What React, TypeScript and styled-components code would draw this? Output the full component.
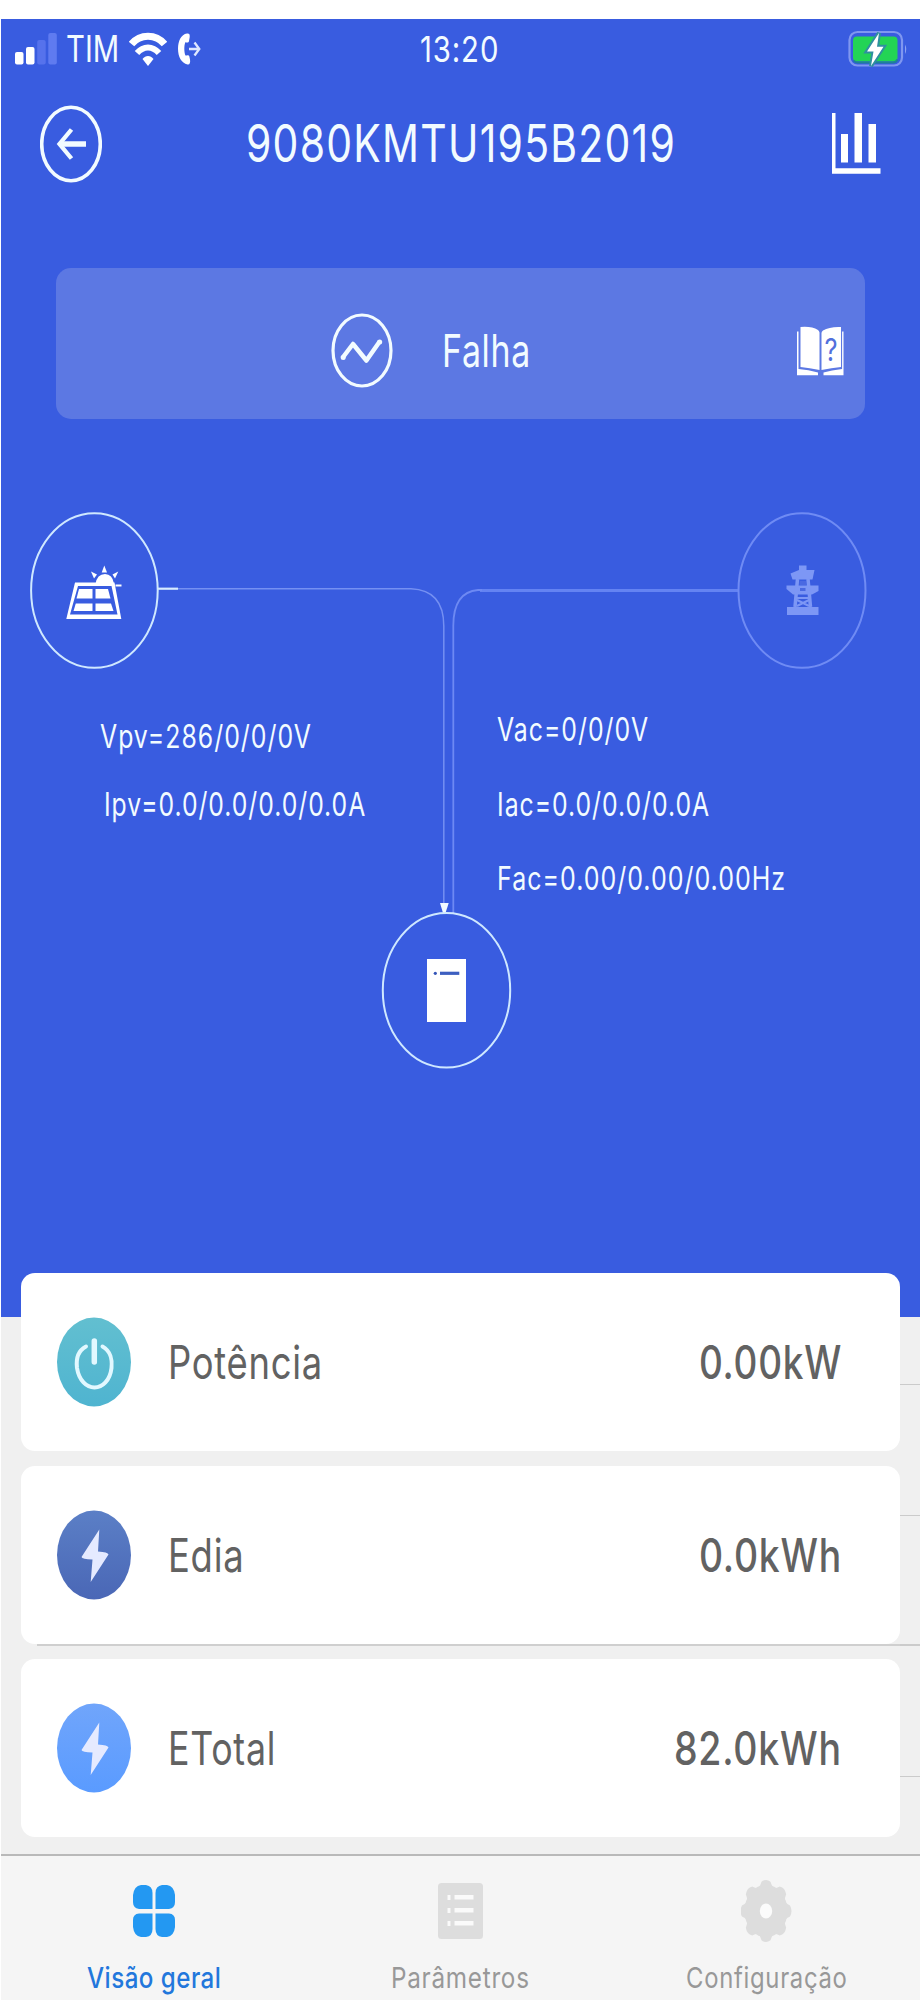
import React, { useLayoutEffect, useRef, useState } from "react";
import styled, { createGlobalStyle } from "styled-components";

const GlobalStyle = createGlobalStyle`
  * { box-sizing: border-box; }
  body {
    margin: 0;
    background: #ffffff;
    font-family: Inter, "Liberation Sans", sans-serif;
  }
  svg { display: block; flex: none; }
`;

const Frame = styled.div`
  width: 919px;
  height: 2000px;
  margin-left: 1px;
  padding-top: 19px;
  display: flex;
  flex-direction: column;
  overflow: hidden;
`;

const Hero = styled.section`
  height: 1298px;
  flex: none;
  background: #395ce0;
  color: #f2fbff;
`;

const FitBox = styled.span<{ $w: number; $size: number; $weight?: number; $color?: string; $track?: number }>`
  display: block;
  flex: none;
  width: ${(p) => p.$w}px;
  height: 40px;
  line-height: 40px;
  font-size: ${(p) => p.$size}px;
  font-weight: ${(p) => p.$weight ?? 400};
  letter-spacing: ${(p) => p.$track ?? 0}em;
  color: ${(p) => p.$color ?? "inherit"};
  white-space: nowrap;
`;

const FitInner = styled.span`
  display: inline-block;
  transform-origin: 0 50%;
`;

type FitProps = { w: number; size: number; weight?: number; color?: string; track?: number; children: string };

/* Condenses a line of text horizontally so that it fills the given width. */
function FitText({ w, size, weight, color, track, children }: FitProps) {
  const ref = useRef<HTMLSpanElement>(null);
  const [scale, setScale] = useState(1);
  useLayoutEffect(() => {
    if (ref.current) setScale(w / ref.current.offsetWidth);
  }, [w, size, track, children]);
  return (
    <FitBox $w={w} $size={size} $weight={weight} $color={color} $track={track}>
      <FitInner ref={ref} style={{ transform: `scaleX(${scale})` }}>
        {children}
      </FitInner>
    </FitBox>
  );
}

const StatusBar = styled.div`
  display: grid;
  grid-template-columns: 405px 80px 1fr;
  align-items: center;
  height: 59px;
  padding: 0 12px 0 14px;
`;

const Carrier = styled.div`
  display: flex;
  align-items: center;
`;

const CarrierName = styled.div`
  margin: 0 10px 0 8px;
`;

const CallSlot = styled.div`
  margin-left: 10px;
`;

const BatterySlot = styled.div`
  justify-self: end;
`;

const Header = styled.header`
  display: flex;
  align-items: center;
  justify-content: space-between;
  height: 131px;
  padding: 0 39px 0 39px;
`;

const TitleSlot = styled.div`
  margin-left: -12px;
`;

const StateBanner = styled.div`
  display: flex;
  align-items: center;
  width: 809px;
  height: 151px;
  margin: 59px 0 0 55px;
  padding: 14px 21px 0 275px;
  border-radius: 15px;
  background: #5c78e3;
`;

const StateName = styled.div`
  margin-left: 49px;
  flex: 1;
`;

const Diagram = styled.div`
  position: relative;
  display: flex;
  height: 898px;
`;

const Wiring = styled.svg`
  position: absolute;
  left: -1px;
  top: 0;
`;

const Readings = styled.div<{ $left: number; $top: number; $gap: number }>`
  display: flex;
  flex-direction: column;
  gap: ${(p) => p.$gap}px;
  width: ${(p) => p.$left + 397}px;
  padding: ${(p) => p.$top}px 0 0 ${(p) => p.$left}px;
`;

const Indent = styled.div`
  margin-left: 4px;
`;

const Totals = styled.section`
  display: flex;
  flex: 1;
  background: #f0f0f0;
  padding-left: 20px;
`;

const CardColumn = styled.div`
  width: 879px;
  margin-top: -44px;
`;

const Card = styled.article<{ $h: number }>`
  display: flex;
  align-items: center;
  height: ${(p) => p.$h}px;
  padding: 0 58px 1px 36px;
  border-radius: 14px;
  background: #ffffff;
`;

const CardLabel = styled.div`
  flex: 1;
  margin-left: 37px;
`;

const Gap = styled.div<{ $h: number }>`
  height: ${(p) => p.$h}px;
`;

const Rule = styled.div`
  height: 2px;
  margin-left: 16px;
  background: #cfcfcf;
`;

const Gutter = styled.div`
  display: flex;
  flex-direction: column;
  width: 20px;
`;

const GutterRow = styled.div<{ $h: number; $thick?: boolean }>`
  height: ${(p) => p.$h}px;
  border-bottom: ${(p) => (p.$thick ? 2 : 1)}px solid #cbcbcb;
`;

const TabBar = styled.nav`
  display: grid;
  grid-template-columns: repeat(3, 1fr);
  flex: none;
  height: 146px;
  border-top: 2px solid #b9b9b9;
  background: #f5f5f5;
`;

const Tab = styled.div`
  display: flex;
  flex-direction: column;
  align-items: center;
  padding-top: 22px;
`;

const TabIcon = styled.div`
  display: flex;
  align-items: center;
  height: 66px;
  margin-bottom: 14px;
`;

const Signal = () => (
  <svg width="43" height="34" viewBox="15 31 43 34">
    <rect x="15" y="51" width="8.5" height="12.5" rx="2" fill="#fff" />
    <rect x="26" y="46" width="8.5" height="17.5" rx="2" fill="#fff" />
    <rect x="37.2" y="39" width="8.5" height="24.5" rx="2" fill="#5672ec" />
    <rect x="48.3" y="32" width="8.5" height="31.5" rx="2" fill="#5f7bf0" />
  </svg>
);

const Wifi = () => (
  <svg width="38" height="36" viewBox="0 0 38 36" fill="none" stroke="#fff">
    <path d="M2.500 13C11 2.500 27 2.500 35.500 13" strokeWidth="7" />
    <path d="M8 22C14.500 14.500 23.500 14.500 30 22" strokeWidth="6" />
    <path d="M13.500 28C16.500 24 21.500 24 24.500 28L19 35Z" fill="#fff" stroke="none" />
  </svg>
);

const Call = () => (
  <svg width="24" height="34" viewBox="178 31 24 34">
    <path
      d="M188 32.500C182 33.500 179 40 179 47.500C179 56 182.500 62 188.500 63.500C190.800 64 191.500 61.500 191 58.500L190.300 55.300C189.800 53.600 187.500 54.300 186.500 54.600C185 51 185 44.500 186.300 41.200C187.700 41.600 189.800 42 190 40L190.700 36C191 33.300 190.200 32.200 188 32.500Z"
      fill="#fff"
    />
    <path d="M190 48H200M195.500 41.500L200.300 48L195.500 54.500" fill="none" stroke="#dfe8ff" strokeWidth="2.300" />
  </svg>
);

const Battery = () => (
  <svg width="60" height="38" viewBox="848 29 60 38">
    <rect x="849.500" y="31" width="52.500" height="33.500" rx="8" fill="none" stroke="#7f97f0" strokeWidth="2.200" />
    <rect x="853" y="35.500" width="44.500" height="25" rx="4" fill="#23d455" />
    <path d="M853.500 59.500Q855 61.500 858 61.500H893Q896 61.500 897.500 58.500" fill="none" stroke="#1f7f9a" strokeWidth="2" />
    <path d="M905 43.500Q907.500 48 905 53Z" fill="#8ca2f2" />
    <path d="M879 32L867 50.500H873.500L871 65L883.500 45.800H877Z" fill="#fff" stroke="#2f8fa0" strokeWidth="4" paintOrder="stroke" />
  </svg>
);

const Back = () => (
  <svg width="62" height="78" viewBox="40 104.500 62 78" fill="none" stroke="#f2fbff">
    <ellipse cx="71" cy="143.500" rx="29.300" ry="36.700" strokeWidth="3.600" />
    <path d="M86 143.500H60" strokeWidth="5.500" />
    <path d="M71.500 129L59.500 143.500L71.500 158" strokeWidth="4.300" />
  </svg>
);

const Chart = () => (
  <svg width="49" height="61" viewBox="832 113 49 61" fill="#fff">
    <path d="M832 113H835.500V168.200H880.500V173.700H832Z" />
    <rect x="841" y="134" width="7" height="28.500" />
    <rect x="854.500" y="113" width="7.500" height="49.500" />
    <rect x="868.500" y="124" width="7.500" height="38.500" />
  </svg>
);

const Wave = () => (
  <svg width="62" height="76" viewBox="331.300 312 62 76" fill="none" stroke="#f2fbff">
    <ellipse cx="362.300" cy="349.500" rx="29" ry="35.500" strokeWidth="3.200" />
    <path d="M342.700 357L353.300 343L366.700 359.500L380 340.500" strokeWidth="4.500" strokeLinejoin="round" />
    <circle cx="343.500" cy="356.500" r="2.500" fill="#f2fbff" stroke="none" />
    <circle cx="380" cy="341" r="2.500" fill="#f2fbff" stroke="none" />
  </svg>
);

const Manual = () => (
  <svg width="48" height="50" viewBox="796.500 325.500 48 50" fill="#fff">
    <path d="M801 326.500Q812 325.500 818.500 329.500Q819.800 330.500 820 332V369.500Q810 367.500 801 366.500Z" />
    <path d="M841.500 326.500Q830 326 823.500 330Q822 331 822 332.500V369.500Q832 367.500 841.500 366.500Z" />
    <path d="M797.500 331H799V368.500Q809 369 818.500 372V374.800H797.500Z" />
    <path d="M844 331H842.600V368.500Q832 369.500 824 372V374.800H844Z" />
    <text x="825" y="360" fontSize="31" fontWeight="400" fill="#5270dc" textLength="13" lengthAdjust="spacingAndGlyphs">
      ?
    </text>
  </svg>
);

const WiringDrawing = () => (
  <Wiring width="920" height="680" viewBox="0 419 920 680" fill="none">
    <path d="M178 588.700H411Q443.800 590 443.800 626V904" stroke="#7590f2" strokeWidth="1.500" />
    <path d="M738 590.500H480" stroke="#6483f2" strokeWidth="3" />
    <path d="M482 590H478Q453.300 592 453.300 626V913" stroke="#6d89f3" strokeWidth="1.800" />
    <path d="M158 588.700H178" stroke="#d8ecff" strokeWidth="2.200" />
    <path d="M440 903H448.700L445.500 913H443Z" fill="#f2fbff" />
    <ellipse cx="94.400" cy="590.500" rx="63.300" ry="77.300" stroke="#cfe8ff" strokeWidth="2" />
    <ellipse cx="802" cy="590.500" rx="63.500" ry="77.300" stroke="#6f8bf4" strokeWidth="2" />
    <ellipse cx="446.500" cy="990.300" rx="63.700" ry="77.300" stroke="#cfe8ff" strokeWidth="2" />

    <g fill="#fff">
      <path fillRule="evenodd" d="M75 582.500H114.500L121.300 619H66.300ZM78 586L70 614.500H117.500L111.500 586Z" />
      <path d="M79 589H92.500V598.500H76.500Z" />
      <path d="M95.500 589H108L110.500 598.500H95.500Z" />
      <path d="M75.800 603.500H92.500V611H73.500Z" />
      <path d="M95.500 603.500H111L113.500 611H95.500Z" />
      <path d="M95.500 584Q97 574 105 574Q112.500 574.500 113.800 583L115 587.500L111 585Z" />
      <path d="M104.300 565.500L107 572.500H101.700Z" />
      <path d="M91 571.500L97 574.500L94 578.500Z" />
      <path d="M118.300 571.500L112.500 574.500L115 578.500Z" />
      <path d="M115.500 584.500H121.500V586.500H115.500Z" />
    </g>

    <g fill="#7d97f5">
      <path d="M799 565.500H806.500V570H814.500L812.500 579.500H792.500L790.500 573.500L799 570Z" />
      <path d="M786.500 585.500H818.500V591L812 594.500H793L786.500 589Z" />
      <path d="M787 607H818.500V615H787Z" />
      <path d="M797.500 579L795 607M808 579L810.500 607" stroke="#7d97f5" strokeWidth="3.500" />
      <path d="M796 598H810M797 600L809 606M809 600L797 606" stroke="#7d97f5" strokeWidth="2" />
      <path d="M799.500 581H806V585H799.500ZM800 588H805.500V591H800Z" fill="#4a69e2" />
    </g>

    <rect x="427" y="959" width="39" height="63" fill="#fff" />
    <circle cx="435.300" cy="973.300" r="1.600" fill="#3455b8" />
    <path d="M440 973.300H459.300" stroke="#3d5fc0" strokeWidth="3.200" />
  </Wiring>
);

const Power = () => (
  <svg width="74" height="90" viewBox="57 1316 74 90">
    <defs>
      <linearGradient id="teal" x1="0" y1="0" x2="0" y2="1">
        <stop offset="0" stopColor="#62bfd0" />
        <stop offset="1" stopColor="#4fb4d0" />
      </linearGradient>
    </defs>
    <ellipse cx="94" cy="1361" rx="37" ry="44.500" fill="url(#teal)" />
    <path d="M86 1345.500C77.500 1350 76 1359 77 1367C79 1379.500 86.500 1386.500 94.500 1386.500C102.500 1386.500 110 1379.500 111.500 1367C112.500 1359 110.500 1350 102.500 1345.500" fill="none" stroke="#e2f8ff" strokeWidth="4" strokeLinecap="round" />
    <path d="M94.300 1340V1361" fill="none" stroke="#e2f8ff" strokeWidth="5.500" strokeLinecap="round" />
  </svg>
);

const BoltBadge = ({ id, from, to }: { id: string; from: string; to: string }) => (
  <svg width="74" height="90" viewBox="57 1509.500 74 90">
    <defs>
      <linearGradient id={id} x1="0" y1="0" x2="0" y2="1">
        <stop offset="0" stopColor={from} />
        <stop offset="1" stopColor={to} />
      </linearGradient>
    </defs>
    <ellipse cx="94" cy="1554.500" rx="37" ry="44.500" fill={`url(#${id})`} />
    <path d="M99.300 1529L81.500 1556.500Q82 1558.500 92.500 1559L90.700 1581.500L108.500 1554Q108 1551.500 98 1551Z" fill="#e5eaff" />
  </svg>
);

const OverviewIcon = () => (
  <svg width="42" height="52" viewBox="0 0 42 52" fill="#2398f2">
    <path d="M8 0H13Q19.500 1 19.500 8V24H6Q0 23 0 17V10Q1 1 8 0Z" />
    <path d="M29 0H34Q41 1 42 10V17Q42 23 36 24H22.500V8Q22.500 1 29 0Z" />
    <path d="M6 28.500H19.500V44Q19.500 51 13 52H8Q1 51 0 42V35Q0 29 6 28.500Z" />
    <path d="M22.500 28.500H36Q42 29 42 35V42Q41 51 34 52H29Q22.500 51 22.500 44Z" />
  </svg>
);

const ListIcon = () => (
  <svg width="45" height="56" viewBox="0 0 45 56" fill="#fafafa">
    <rect width="45" height="56" rx="3.500" fill="#dddddd" />
    <rect x="9.500" y="12" width="3" height="5" />
    <rect x="9.500" y="25" width="3" height="5" />
    <rect x="9.500" y="38" width="3" height="5" />
    <rect x="16.500" y="12" width="19" height="4.500" />
    <rect x="16.500" y="25" width="19" height="4.500" />
    <rect x="16.500" y="38" width="19" height="4.500" />
  </svg>
);

const GearIcon = () => (
  <svg width="52" height="64" viewBox="-25 -32 52 64">
    <g transform="scale(1 1.220)" fill="#dddddd">
      <circle r="21.500" />
      {[0, 45, 90, 135, 180, 225, 270, 315].map((a) => (
        <path key={a} transform={`rotate(${a})`} d="M-7.500 -19Q-5.500 -21 -4.500 -24Q0 -27 4.500 -24Q5.500 -21 7.500 -19Z" />
      ))}
      <circle r="6.200" fill="#fbfbfb" />
    </g>
  </svg>
);

export default function App() {
  return (
    <>
      <GlobalStyle />
      <Frame>
        <Hero>
          <StatusBar>
            <Carrier>
              <Signal />
              <CarrierName>
                <FitText w={53} size={37}>TIM</FitText>
              </CarrierName>
              <Wifi />
              <CallSlot>
                <Call />
              </CallSlot>
            </Carrier>
            <FitText w={79} size={36} track={0.03}>13:20</FitText>
            <BatterySlot>
              <Battery />
            </BatterySlot>
          </StatusBar>

          <Header>
            <Back />
            <TitleSlot>
              <FitText w={430} size={52} track={0.03}>9080KMTU195B2019</FitText>
            </TitleSlot>
            <Chart />
          </Header>

          <StateBanner>
            <Wave />
            <StateName>
              <FitText w={89} size={45} track={0.02}>Falha</FitText>
            </StateName>
            <Manual />
          </StateBanner>

          <Diagram>
            <WiringDrawing />
            <Readings $left={99} $top={297.5} $gap={27}>
              <FitText w={212} size={32} track={0.04}>Vpv=286/0/0/0V</FitText>
              <Indent>
                <FitText w={262} size={33} track={0.04}>Ipv=0.0/0.0/0.0/0.0A</FitText>
              </Indent>
            </Readings>
            <Readings $left={0} $top={290.5} $gap={34.5}>
              <FitText w={152} size={32} track={0.04}>Vac=0/0/0V</FitText>
              <FitText w={213} size={33} track={0.04}>Iac=0.0/0.0/0.0A</FitText>
              <FitText w={289} size={32} track={0.04}>Fac=0.00/0.00/0.00Hz</FitText>
            </Readings>
          </Diagram>
        </Hero>

        <Totals>
          <CardColumn>
            <Card $h={178}>
              <Power />
              <CardLabel>
                <FitText w={155} size={46} track={0.02} color="#626262">Potência</FitText>
              </CardLabel>
              <FitText w={143} size={46} weight={500} track={0.02} color="#626262">0.00kW</FitText>
            </Card>
            <Gap $h={15} />
            <Card $h={178}>
              <BoltBadge id="indigo" from="#5b7fc6" to="#4a67b6" />
              <CardLabel>
                <FitText w={76} size={46} track={0.02} color="#626262">Edia</FitText>
              </CardLabel>
              <FitText w={143} size={46} weight={500} track={0.02} color="#626262">0.0kWh</FitText>
            </Card>
            <Rule />
            <Gap $h={13} />
            <Card $h={178}>
              <BoltBadge id="azure" from="#70a5fb" to="#5a9bff" />
              <CardLabel>
                <FitText w={108} size={46} track={0.02} color="#626262">ETotal</FitText>
              </CardLabel>
              <FitText w={168} size={46} weight={500} track={0.02} color="#626262">82.0kWh</FitText>
            </Card>
          </CardColumn>
          <Gutter>
            <GutterRow $h={68} />
            <GutterRow $h={131} />
            <GutterRow $h={130} $thick />
            <GutterRow $h={131} />
          </Gutter>
        </Totals>

        <TabBar>
          <Tab>
            <TabIcon><OverviewIcon /></TabIcon>
            <FitText w={134} size={29} weight={500} track={0.02} color="#2277dc">Visão geral</FitText>
          </Tab>
          <Tab>
            <TabIcon><ListIcon /></TabIcon>
            <FitText w={139} size={29} track={0.03} color="#989898">Parâmetros</FitText>
          </Tab>
          <Tab>
            <TabIcon><GearIcon /></TabIcon>
            <FitText w={162} size={29} track={0.03} color="#989898">Configuração</FitText>
          </Tab>
        </TabBar>
      </Frame>
    </>
  );
}
